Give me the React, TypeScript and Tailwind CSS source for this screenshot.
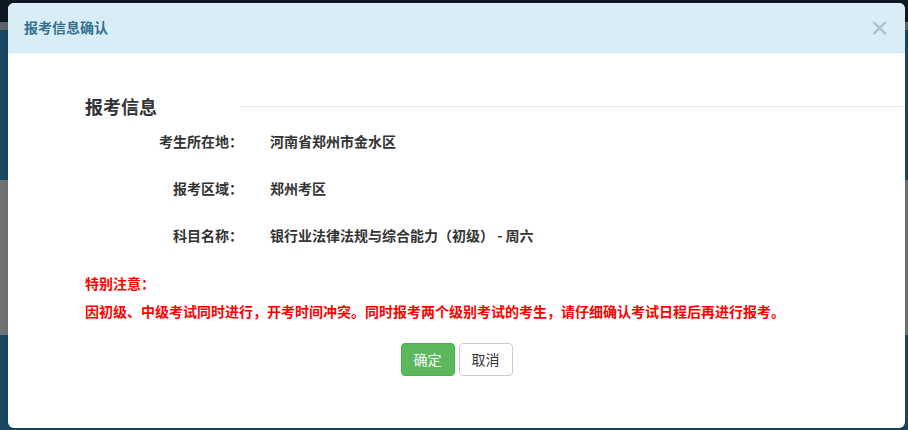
export default function App() {
  const rows = [
    { label: "考生所在地：", value: "河南省郑州市金水区" },
    { label: "报考区域：", value: "郑州考区" },
    { label: "科目名称：", value: "银行业法律法规与综合能力（初级） - 周六" },
  ];

  return (
    <div
      className="relative w-[908px] h-[430px] overflow-hidden"
      style={{ fontFamily: '"Noto Sans CJK SC", "Liberation Sans", sans-serif' }}
    >
      {/* page behind the dimmed overlay */}
      <div className="flex flex-col h-full">
        <div className="h-[22px] bg-[#0c1822]" />
        <div className="h-[8px] bg-[#5f6568]" />
        <div className="h-[150px] bg-[#1a4862]" />
        <div className="h-[155px] bg-[#737373]" />
        <div className="flex-1 bg-[#1a4862]" />
      </div>

      {/* modal */}
      <div className="absolute left-[8px] top-[3px] w-[897px] h-[425px] bg-white rounded-md flex flex-col shadow-lg">
        <div className="h-[50px] shrink-0 flex items-center justify-between pl-4 pr-[15px] bg-[#d9edf7] border-b border-[#bce8f1] rounded-t-md">
          <h4 className="text-[14px] font-bold text-[#31708f]">报考信息确认</h4>
          <span className="text-[21px] font-bold leading-none text-[#aec1c9]">×</span>
        </div>

        <div className="pt-[41px] pl-[77px]">
          <div className="flex items-center">
            <h3 className="w-[155px] text-[18px] leading-[24px] font-bold text-[#333]">报考信息</h3>
            <div className="flex-1 h-px bg-[#e8e8e8]" />
          </div>

          {rows.map((row) => (
            <div key={row.label} className="flex items-center h-[47px] text-[14px] font-bold text-[#333]">
              <span className="w-[158px] text-right">{row.label}</span>
              <span className="ml-[27px]">{row.value}</span>
            </div>
          ))}

          <div className="mt-[14px] text-[14px] leading-[20px] font-bold text-[#ff0000]">
            <p>特别注意：</p>
            <p className="mt-[8px]">
              因初级、中级考试同时进行，开考时间冲突。同时报考两个级别考试的考生，请仔细确认考试日程后再进行报考。
            </p>
          </div>
        </div>

        <div className="flex justify-center gap-[4px] mt-[22px]">
          <button className="w-[54px] h-[33px] rounded bg-[#5cb85c] border border-[#4cae4c] text-white text-[14px]">
            确定
          </button>
          <button className="w-[54px] h-[33px] rounded bg-white border border-[#ccc] text-[#333] text-[14px]">
            取消
          </button>
        </div>
      </div>
    </div>
  );
}
